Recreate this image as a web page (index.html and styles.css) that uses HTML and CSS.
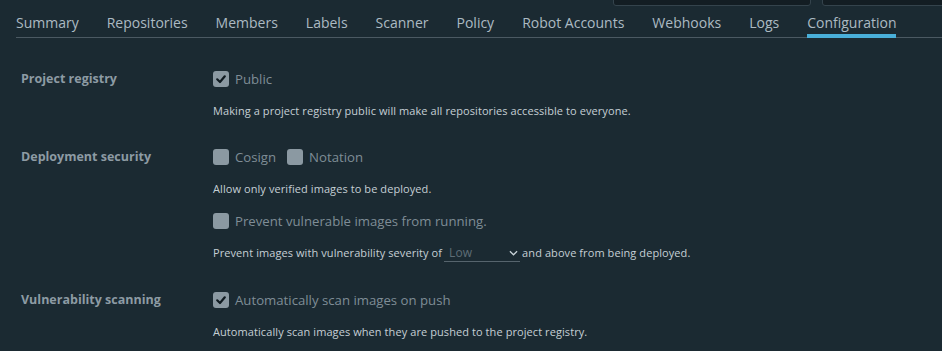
FILE: index.html
```html
<!DOCTYPE html>
<html>
<head>
<meta charset="utf-8">
<link rel="stylesheet" href="styles.css">
</head>
<body>
<div class="topbar">
  <div class="ghost ghost-a"></div>
  <div class="ghost ghost-b"></div>
</div>
<div class="page">
  <nav class="tabs">
    <span class="tab">Summary</span>
    <span class="tab">Repositories</span>
    <span class="tab">Members</span>
    <span class="tab">Labels</span>
    <span class="tab">Scanner</span>
    <span class="tab">Policy</span>
    <span class="tab">Robot Accounts</span>
    <span class="tab">Webhooks</span>
    <span class="tab">Logs</span>
    <span class="tab active">Configuration</span>
  </nav>
  <div class="form">
    <div class="row">
      <div class="label">Project registry</div>
      <div class="field">
        <div class="checks">
          <label class="check"><span class="box on"><svg viewBox="0 0 16 16" width="16" height="16"><path d="M4.2 8.3 L7 11 L11.8 5.3" fill="none" stroke="#0f1a20" stroke-width="2.2" stroke-linecap="round" stroke-linejoin="round"/></svg></span>Public</label>
        </div>
        <div class="help">Making a project registry public will make all repositories accessible to everyone.</div>
      </div>
    </div>
    <div class="row">
      <div class="label">Deployment security</div>
      <div class="field">
        <div class="checks">
          <label class="check"><span class="box"></span>Cosign</label>
          <label class="check"><span class="box"></span>Notation</label>
        </div>
        <div class="help">Allow only verified images to be deployed.</div>
        <div class="checks sub">
          <label class="check"><span class="box"></span>Prevent vulnerable images from running.</label>
        </div>
        <div class="help tight">Prevent images with vulnerability severity of <span class="select">Low<svg class="chev" viewBox="0 0 10 6" width="9" height="6"><path d="M1 1 L5 5 L9 1" fill="none" stroke="#c8d2d8" stroke-width="1.4"/></svg></span> and above from being deployed.</div>
      </div>
    </div>
    <div class="row last">
      <div class="label">Vulnerability scanning</div>
      <div class="field">
        <div class="checks">
          <label class="check"><span class="box on"><svg viewBox="0 0 16 16" width="16" height="16"><path d="M4.2 8.3 L7 11 L11.8 5.3" fill="none" stroke="#0f1a20" stroke-width="2.2" stroke-linecap="round" stroke-linejoin="round"/></svg></span>Automatically scan images on push</label>
        </div>
        <div class="help">Automatically scan images when they are pushed to the project registry.</div>
      </div>
    </div>
  </div>
</div>
</body>
</html>
```
FILE: styles.css
```css
html, body {
  margin: 0;
  padding: 0;
  background: #1b2a32;
  font-family: "Open Sans", Lato, sans-serif;
  color: #acbac3;
  height: 100%;
  overflow: hidden;
}
.topbar {
  position: absolute;
  top: 0;
  left: 0;
  right: 0;
  height: 5px;
}
.ghost {
  position: absolute;
  top: -4px;
  height: 8px;
  background: #131d23;
  border: 1px solid #34434c;
  border-radius: 3px;
}
.ghost-a { left: 613px; width: 196px; }
.ghost-b { left: 822px; width: 140px; }
.page {
  padding-left: 16px;
}
.tabs {
  display: flex;
  gap: 28px;
  padding-top: 12px;
  border-bottom: 1px solid #4b5962;
  box-sizing: border-box;
  height: 38px;
}
.tab {
  font-size: 14px;
  line-height: 21px;
  color: #acbac3;
  position: relative;
  white-space: nowrap;
}
.tab.active::after {
  content: "";
  position: absolute;
  left: 0;
  right: 0;
  top: 22px;
  height: 4px;
  background: #49afd9;
}
.form {
  padding-top: 30px;
}
.row {
  display: grid;
  grid-template-columns: 197px 1fr;
  margin-bottom: 27px;
}
.row.last { margin-bottom: 0; }
.label {
  padding-left: 5px;
  font-size: 12.5px;
  font-weight: 700;
  color: #8d9ba4;
  line-height: 22px;
}
.field {
  display: flex;
  flex-direction: column;
}
.checks {
  display: flex;
  gap: 11px;
  height: 22px;
  align-items: center;
}
.checks.sub {
  margin-top: 13px;
}
.check {
  display: flex;
  align-items: center;
  gap: 6px;
  font-size: 13.2px;
  color: #7f8d96;
}
.box {
  width: 16px;
  height: 16px;
  border-radius: 3px;
  background: #8b99a2;
  display: inline-block;
}
.box svg { display: block; }
.help {
  margin-top: 13px;
  font-size: 11px;
  letter-spacing: 0.08px;
  line-height: 16px;
  color: #c5cfd5;
  display: flex;
  align-items: center;
  white-space: nowrap;
}
.help.tight { margin-top: 12px; }
.select {
  display: inline-flex;
  align-items: center;
  justify-content: space-between;
  width: 76px;
  margin: 0 2px 0 2px;
  padding-left: 5px;
  border-bottom: 1px solid #56646d;
  color: #5e6d76;
  font-size: 12px;
  line-height: 17px;
  box-sizing: border-box;
}
.chev { margin-right: 2px; }
```
